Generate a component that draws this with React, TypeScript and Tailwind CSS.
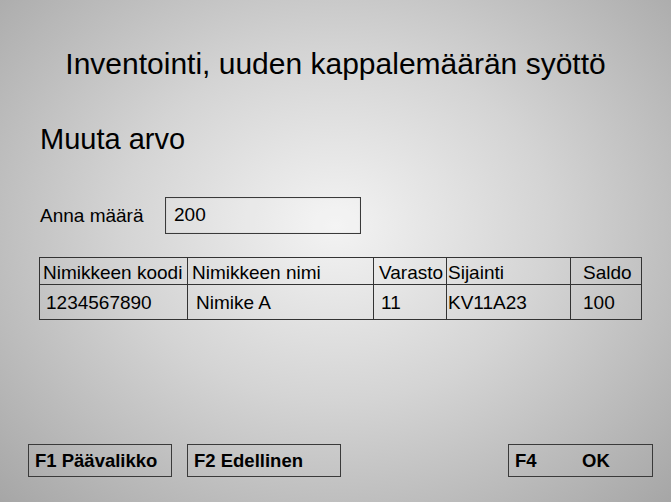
import React from "react";

const cols = ["w-[148px]", "w-[186px]", "w-[73px]", "w-[124px]", "flex-1"];

const header = [
  { text: "Nimikkeen koodi", pad: "pl-[3px]" },
  { text: "Nimikkeen nimi", pad: "pl-[4px]" },
  { text: "Varasto", pad: "pl-[5px]" },
  { text: "Sijainti", pad: "pl-[1px]" },
  { text: "Saldo", pad: "pl-[12px]" },
];

const row = [
  { text: "1234567890", pad: "pl-[6px]" },
  { text: "Nimike A", pad: "pl-[8px]" },
  { text: "11", pad: "pl-[7px]" },
  { text: "KV11A23", pad: "pl-[1px]" },
  { text: "100", pad: "pl-[12px]" },
];

const App = () => {
  return (
    <div
      className="w-[671px] h-[502px] overflow-hidden text-black bg-[radial-gradient(ellipse_at_50%_45%,#f3f3f3_0%,#d4d4d4_45%,#a6a6a6_100%)]"
      style={{ fontFamily: '"Liberation Sans", Arial, sans-serif' }}
    >
      <div className="flex flex-col h-full">
        <h1 className="mt-[47px] text-center text-[30px] leading-[34px] font-normal">
          Inventointi, uuden kappalemäärän syöttö
        </h1>

        <h2 className="mt-[42px] ml-[40px] text-[29px] leading-[33px] font-normal">Muuta arvo</h2>

        <div className="mt-[41px] ml-[40px] flex items-center">
          <span className="w-[125px] text-[19px] leading-[22px]">Anna määrä</span>
          <div className="w-[196px] h-[37px] border border-[#3a3a3a] flex items-center pl-[8px] text-[19px] bg-white/10 shadow-[inset_0_0_1px_rgba(0,0,0,0.3)]">
            200
          </div>
        </div>

        <div className="mt-[23px] ml-[39px] w-[603px] border border-[#333]">
          <div className="flex h-[27px] border-b border-[#333]">
            {header.map((h, i) => (
              <div
                key={h.text}
                className={`${cols[i]} ${h.pad} ${i < 4 ? "border-r border-[#333]" : ""} flex items-center pt-[2px] text-[19px] leading-none`}
              >
                {h.text}
              </div>
            ))}
          </div>
          <div className="flex h-[34px]">
            {row.map((c, i) => (
              <div
                key={c.text}
                className={`${cols[i]} ${c.pad} ${i < 4 ? "border-r border-[#333]" : ""} flex items-center text-[19px] leading-none`}
              >
                {c.text}
              </div>
            ))}
          </div>
        </div>

        <div className="mt-auto mb-[25px] ml-[28px] mr-[18px] flex">
          <div className="w-[144px] h-[33px] border border-[#3a3a3a] flex items-center pl-[6px] font-bold text-[18.5px]">
            F1 Päävalikko
          </div>
          <div className="ml-[15px] w-[154px] h-[33px] border border-[#3a3a3a] flex items-center pl-[6px] font-bold text-[18.5px]">
            F2 Edellinen
          </div>
          <div className="ml-auto w-[145px] h-[33px] border border-[#3a3a3a] flex items-center pl-[6px] font-bold text-[18.5px]">
            <span className="w-[67px]">F4</span>
            <span>OK</span>
          </div>
        </div>
      </div>
    </div>
  );
};

export default App;
